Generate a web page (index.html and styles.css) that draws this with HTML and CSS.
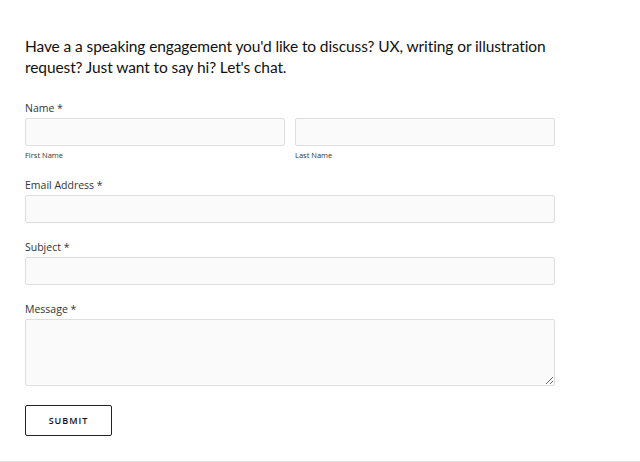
FILE: index.html
```html
<!DOCTYPE html>
<html>
<head>
<meta charset="utf-8">
<link rel="stylesheet" href="styles.css">
</head>
<body>
<div class="page">
  <p class="intro">Have a a speaking engagement you'd like to discuss? UX, writing or illustration request? Just want to say hi? Let's chat.</p>
  <form class="form">
    <div class="field">
      <div class="label">Name *</div>
      <div class="name-row">
        <div class="name-col">
          <input class="input" type="text">
          <div class="sublabel">First Name</div>
        </div>
        <div class="name-col">
          <input class="input" type="text">
          <div class="sublabel">Last Name</div>
        </div>
      </div>
    </div>
    <div class="field">
      <div class="label">Email Address *</div>
      <input class="input" type="text">
    </div>
    <div class="field">
      <div class="label">Subject *</div>
      <input class="input" type="text">
    </div>
    <div class="field">
      <div class="label">Message *</div>
      <textarea class="textarea"></textarea>
    </div>
    <button class="submit" type="button">SUBMIT</button>
  </form>
</div>
</body>
</html>
```
FILE: styles.css
```css
html, body {
  margin: 0;
  padding: 0;
  background: #fff;
}
.page {
  height: 462px;
  box-sizing: border-box;
  border-bottom: 1px solid #e4e4e4;
  padding: 36px 0 0 25px;
  width: 640px;
}
.intro {
  margin: 0;
  width: 540px;
  font-family: "Lato", sans-serif;
  font-size: 15.5px;
  letter-spacing: -0.1px;
  line-height: 21px;
  color: #111;
}
.form {
  margin-top: 23px;
  width: 530px;
  display: flex;
  flex-direction: column;
}
.field {
  display: flex;
  flex-direction: column;
  margin-bottom: 17px;
}
.label {
  font-family: "Open Sans", sans-serif;
  font-size: 10.5px;
  line-height: 14px;
  color: #333;
  margin-bottom: 3px;
}
.name-row {
  display: flex;
  gap: 10px;
}
.name-col {
  flex: 1;
  display: flex;
  flex-direction: column;
}
.sublabel {
  font-family: "Open Sans", sans-serif;
  font-size: 7.5px;
  line-height: 10px;
  color: #333;
  margin-top: 4px;
  margin-bottom: 1px;
}
.input, .textarea {
  display: block;
  box-sizing: border-box;
  width: 100%;
  height: 28px;
  margin: 0;
  background: #fafafa;
  border: 1px solid #dedede;
  border-radius: 2px;
  padding: 4px;
}
.textarea {
  height: 67px;
  resize: vertical;
}
.submit {
  align-self: flex-start;
  width: 87px;
  height: 31px;
  margin-top: 2px;
  background: #fff;
  border: 1px solid #222;
  border-radius: 2px;
  font-family: "Open Sans", sans-serif;
  font-weight: 600;
  font-size: 9px;
  letter-spacing: 1px;
  color: #111;
  padding: 0;
}
```
